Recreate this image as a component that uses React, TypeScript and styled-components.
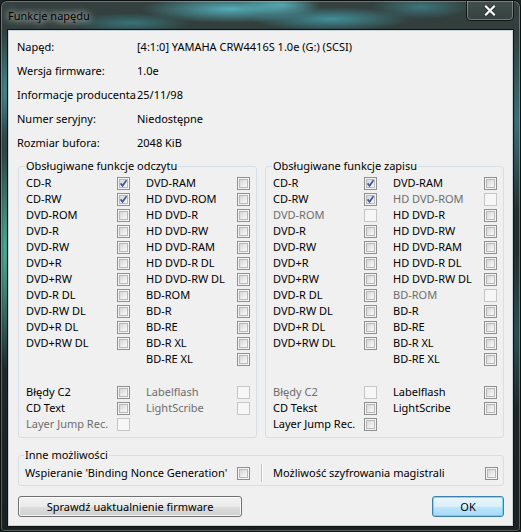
import React from 'react';
import styled, { createGlobalStyle } from 'styled-components';

const GlobalStyle = createGlobalStyle`
  html, body {
    margin: 0;
    padding: 0;
    background: #1c2424;
  }
  body {
    font-family: "Noto Sans", "Open Sans", sans-serif;
    font-size: 11px;
    color: #000;
  }
`

const Window = styled.div`
  width: 521px;
  height: 532px;
  box-sizing: border-box;
  display: flex;
  flex-direction: column;
  border: 1px solid #0c1010;
  border-radius: 7px 7px 4px 4px;
  overflow: hidden;
  box-shadow: inset 0 0 0 1px rgba(255, 255, 255, 0.28);
  background:
    radial-gradient(ellipse 90px 14px at 230px 8px, rgba(90, 200, 215, 0.8), transparent),
    radial-gradient(ellipse 80px 12px at 330px 18px, rgba(70, 170, 185, 0.75), transparent),
    radial-gradient(ellipse 60px 10px at 130px 22px, rgba(60, 150, 160, 0.6), transparent),
    radial-gradient(ellipse 50px 12px at 420px 6px, rgba(70, 160, 170, 0.55), transparent),
    radial-gradient(ellipse 40px 10px at 280px 4px, rgba(100, 210, 220, 0.6), transparent),
    radial-gradient(ellipse 8px 120px at 4px 250px, rgba(90, 220, 190, 0.75), transparent),
    radial-gradient(ellipse 8px 60px at 4px 90px, rgba(80, 190, 200, 0.6), transparent),
    radial-gradient(ellipse 8px 90px at 516px 120px, rgba(70, 170, 180, 0.55), transparent),
    radial-gradient(ellipse 8px 80px at 516px 330px, rgba(60, 140, 150, 0.4), transparent),
    linear-gradient(180deg, #34413f 0%, #26302f 30%, #1a2121 100%);
`

const TitleBar = styled.div`
  height: 29px;
  flex: none;
  display: flex;
  align-items: flex-start;
  justify-content: space-between;
  padding: 0 6px 0 7px;
`

const Title = styled.div`
  margin-top: 6px;
  line-height: 18px;
  color: #000;
  text-shadow: 0 0 6px rgba(255, 255, 255, 0.9), 0 0 10px rgba(255, 255, 255, 0.7);
`

const CloseButton = styled.div`
  width: 46px;
  height: 20px;
  margin-top: -1px;
  display: flex;
  align-items: center;
  justify-content: center;
  border: 1px solid rgba(0, 0, 0, 0.7);
  border-top: none;
  border-radius: 0 0 5px 5px;
  box-shadow: inset 0 0 0 1px rgba(255, 255, 255, 0.3);
  background: linear-gradient(180deg, rgba(255, 255, 255, 0.08), rgba(255, 255, 255, 0.02));
`

const Client = styled.div`
  flex: 1;
  margin: 0 7px 7px 7px;
  padding: 3px 8px 8px 9px;
  background: #f0f0f0;
  border: 1px solid #c9d3d9;
  outline: 1px solid #0d1414;
  display: flex;
  flex-direction: column;
`

const InfoList = styled.div`
  margin-left: -1px;
  display: flex;
  flex-direction: column;
`

const InfoRow = styled.div`
  height: 24px;
  display: flex;
  align-items: center;
  white-space: nowrap;
`

const InfoLabel = styled.span`
  width: 120px;
  flex: none;
  overflow: visible;
`

const Columns = styled.div<{ $top: number }>`
  margin-top: ${p => p.$top}px;
  display: flex;
  gap: 8px;
`

const Group = styled.fieldset<{ $pad?: number }>`
  margin: 0;
  min-width: 0;
  padding: 0 ${p => p.$pad ?? 7}px 5px ${p => p.$pad ?? 7}px;
  border: 1px solid #d5dfe5;
  border-radius: 3px;
  flex: 1;
`

const Legend = styled.legend`
  padding: 0 1px;
  margin-left: -1px;
  line-height: 16px;
`

const Rows = styled.div<{ $top?: number }>`
  margin-top: ${p => p.$top ?? 1}px;
  display: flex;
  flex-direction: column;
`

const Row = styled.div`
  height: 16px;
  display: flex;
  align-items: center;
  gap: 16px;
`

const Pair = styled.div`
  display: grid;
  grid-template-columns: 91px 13px;
  align-items: center;
`

const Label = styled.span<{ $disabled?: boolean }>`
  white-space: nowrap;
  line-height: 16px;
  color: ${p => (p.$disabled ? '#6d6d6d' : '#000')};
`

const Box = styled.span<{ $disabled?: boolean }>`
  width: 13px;
  height: 13px;
  box-sizing: border-box;
  padding: 1px;
  display: block;
  border: 1px solid ${p => (p.$disabled ? '#c6c6c6' : '#8f8f8f')};
  background: ${p => (p.$disabled ? '#f7f7f7' : '#f4f4f4')};
`

const BoxInner = styled.span<{ $disabled?: boolean }>`
  width: 9px;
  height: 9px;
  box-sizing: border-box;
  display: flex;
  align-items: center;
  justify-content: center;
  border: 1px solid ${p => (p.$disabled ? '#f7f7f7' : '#b8b8b8')};
  background: ${p =>
    p.$disabled ? '#f7f7f7' : 'linear-gradient(135deg, #d6d6d6 0%, #ececec 60%, #f8f8f8 100%)'};
`

const OtherRow = styled.div`
  margin-top: 1px;
  height: 16px;
  display: grid;
  grid-template-columns: 212px 13px 23px 212px 13px;
  align-items: center;
`

const Separator = styled.span`
  justify-self: center;
  width: 1px;
  height: 18px;
  background: #c4c4c4;
  box-shadow: 1px 0 0 #fff;
`

const ButtonBar = styled.div`
  margin-top: 10px;
  display: flex;
  justify-content: space-between;
`

const Button = styled.div<{ $primary?: boolean; $width: number }>`
  width: ${p => p.$width}px;
  height: 21px;
  box-sizing: border-box;
  display: flex;
  align-items: center;
  justify-content: center;
  border-radius: 3px;
  border: 1px solid ${p => (p.$primary ? '#3c7fb1' : '#707070')};
  box-shadow: inset 0 0 0 1px ${p => (p.$primary ? 'rgba(72, 210, 250, 0.7)' : 'rgba(255, 255, 255, 0.8)')};
  background: ${p =>
    p.$primary
      ? 'linear-gradient(180deg, #eaf6fd 0%, #d9f0fc 50%, #bee6fd 51%, #a7d9f5 100%)'
      : 'linear-gradient(180deg, #f2f2f2 0%, #ebebeb 50%, #dddddd 51%, #cfcfcf 100%)'};
`

type Item = { label: string; checked?: boolean; disabled?: boolean }

const Checkbox = ({ checked, disabled }: { checked?: boolean; disabled?: boolean }) => (
  <Box $disabled={disabled}>
    <BoxInner $disabled={disabled}>
      {checked && (
        <svg width="9" height="9" viewBox="0 0 9 9" style={{ margin: -1 }}>
          <path d="M1.6 4.4 L3.6 6.8 L7.4 1.2" fill="none" stroke="#3f56a6" strokeWidth="1.7" />
        </svg>
      )}
    </BoxInner>
  </Box>
)

const Cell = ({ item }: { item?: Item }) =>
  item ? (
    <Pair>
      <Label $disabled={item.disabled}>{item.label}</Label>
      <Checkbox checked={item.checked} disabled={item.disabled} />
    </Pair>
  ) : (
    <Pair />
  )

const FeatureGroup = ({ title, left, right, extra }: { title: string; left: Item[]; right: Item[]; extra: (Item | undefined)[][] }) => (
  <Group>
    <Legend>{title}</Legend>
    <Rows>
      {right.map((r, i) => (
        <Row key={r.label}>
          <Cell item={left[i]} />
          <Cell item={r} />
        </Row>
      ))}
    </Rows>
    <Rows $top={17}>
      {extra.map((pair, i) => (
        <Row key={i}>
          <Cell item={pair[0]} />
          <Cell item={pair[1]} />
        </Row>
      ))}
    </Rows>
  </Group>
)

const names = (list: string[], checked: string[] = [], disabled: string[] = []): Item[] =>
  list.map(label => ({ label, checked: checked.includes(label), disabled: disabled.includes(label) }))

const col1 = ['CD-R', 'CD-RW', 'DVD-ROM', 'DVD-R', 'DVD-RW', 'DVD+R', 'DVD+RW', 'DVD-R DL', 'DVD-RW DL', 'DVD+R DL', 'DVD+RW DL']
const col2 = ['DVD-RAM', 'HD DVD-ROM', 'HD DVD-R', 'HD DVD-RW', 'HD DVD-RAM', 'HD DVD-R DL', 'HD DVD-RW DL', 'BD-ROM', 'BD-R', 'BD-RE', 'BD-R XL', 'BD-RE XL']

const info = [
  ['Napęd:', '[4:1:0] YAMAHA CRW4416S 1.0e (G:) (SCSI)'],
  ['Wersja firmware:', '1.0e'],
  ['Informacje producenta', '25/11/98'],
  ['Numer seryjny:', 'Niedostępne'],
  ['Rozmiar bufora:', '2048 KiB'],
]

const App = () => (
  <>
    <GlobalStyle />
    <Window>
      <TitleBar>
        <Title>Funkcje napędu</Title>
        <CloseButton>
          <svg width="12" height="11" viewBox="0 0 12 11">
            <path d="M2 1.5 L10 9.5 M10 1.5 L2 9.5" stroke="#2a3030" strokeWidth="4" strokeLinecap="square" />
            <path d="M2 1.5 L10 9.5 M10 1.5 L2 9.5" stroke="#ffffff" strokeWidth="2.2" strokeLinecap="square" />
          </svg>
        </CloseButton>
      </TitleBar>
      <Client>
        <InfoList>
          {info.map(([label, value]) => (
            <InfoRow key={label}>
              <InfoLabel>{label}</InfoLabel>
              <span>{value}</span>
            </InfoRow>
          ))}
        </InfoList>
        <Columns $top={4}>
          <FeatureGroup
            title="Obsługiwane funkcje odczytu"
            left={names(col1, ['CD-R', 'CD-RW'])}
            right={names(col2)}
            extra={[
              [{ label: 'Błędy C2' }, { label: 'Labelflash', disabled: true }],
              [{ label: 'CD Text' }, { label: 'LightScribe', disabled: true }],
              [{ label: 'Layer Jump Rec.', disabled: true }, undefined],
            ]}
          />
          <FeatureGroup
            title="Obsługiwane funkcje zapisu"
            left={names(col1, ['CD-R', 'CD-RW'], ['DVD-ROM'])}
            right={names(col2, [], ['HD DVD-ROM', 'BD-ROM'])}
            extra={[
              [{ label: 'Błędy C2', disabled: true }, { label: 'Labelflash' }],
              [{ label: 'CD Tekst' }, { label: 'LightScribe' }],
              [{ label: 'Layer Jump Rec.' }, undefined],
            ]}
          />
        </Columns>
        <Columns $top={9}>
          <Group $pad={6}>
            <Legend>Inne możliwości</Legend>
            <OtherRow>
              <Label>Wspieranie 'Binding Nonce Generation'</Label>
              <Checkbox />
              <Separator />
              <Label>Możliwość szyfrowania magistrali</Label>
              <Checkbox />
            </OtherRow>
          </Group>
        </Columns>
        <ButtonBar>
          <Button $width={224}>Sprawdź uaktualnienie firmware</Button>
          <Button $width={72} $primary>OK</Button>
        </ButtonBar>
      </Client>
    </Window>
  </>
)

export default App
